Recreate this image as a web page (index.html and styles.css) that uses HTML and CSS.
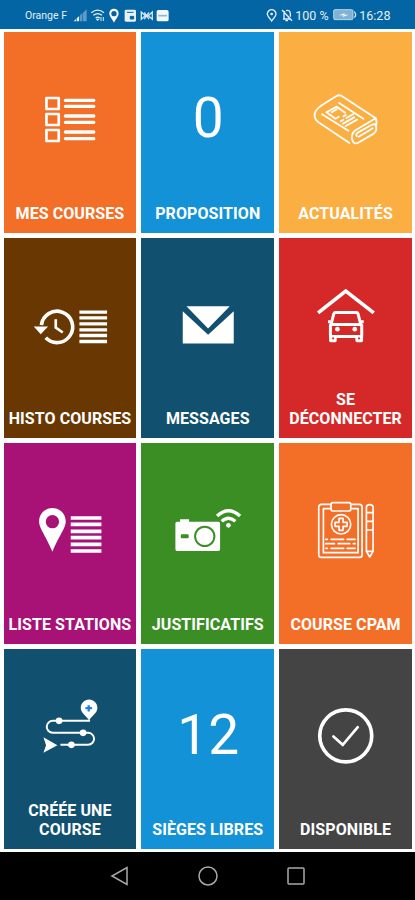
FILE: index.html
```
<!DOCTYPE html>
<html lang="fr">
<head>
    <meta charset="UTF-8">
    <meta name="viewport" content="width=device-width, initial-scale=1.0">
    <title>Menu</title>
    <link rel="stylesheet" href="styles.css">
</head>
<body>
    <header class="status-bar">
        <span class="carrier">Orange F</span>
        <svg class="status-icons" viewBox="220 20 292 50">
            <path d="M222 63h7v-7zM231 63h7V48l-7 6z" fill="#e3eff7"/>
            <path d="M240 63h7V39l-7 7zM249 63h12V27l-12 12z" fill="#5c9cc6"/>
            <g fill="none" stroke="#e3eff7" stroke-width="4">
                <path d="M275 37q19-15 38 0M281 45q13-10 26 0M288 53q6-5 12 0"/>
                <path d="M304 50v12M311 50v12" stroke-width="3"/>
            </g>
            <path d="M294 62l-6-7h12z" fill="#e3eff7"/>
            <path fill-rule="evenodd" d="M343 25c-8 0-14 6-14 14 0 10 8 16 14 28 6-12 14-18 14-28 0-8-6-14-14-14zm0 7a8 8 0 1 1 0 16 8 8 0 0 1 0-16z" fill="#fff"/>
            <rect x="375" y="28" width="34" height="36" rx="4" fill="#e8f2f8"/>
            <path d="M382 36h20M392 48h10v8h-10z" stroke="#0465a4" stroke-width="3" fill="#0465a4"/>
            <path d="M425 35v22l12-11zM458 35v22l-12-11zM434 36l14 20M448 36l-14 20" fill="none" stroke="#d3e6f2" stroke-width="4"/>
            <rect x="471" y="29" width="36" height="34" rx="5" fill="#f1f7fa"/>
            <path d="M476 46h26" stroke="#8bb8d6" stroke-width="5"/>
        </svg>
        <svg class="status-alerts" viewBox="185 20 84 50">
            <g fill="none" stroke="#e3eff7" stroke-width="4">
                <path d="M202 28c-7 0-13 6-13 13 0 8 8 13 13 21 5-8 13-13 13-21 0-7-6-13-13-13z"/>
                <path d="M233 29l30 32M236 56h22M239 55V42q0-6 3-9M245 31q12-4 13 9v9M243 61h8"/>
            </g>
            <circle cx="202" cy="41" r="4" fill="#e3eff7"/>
        </svg>
        <span class="percent">100 %</span>
        <svg class="battery" viewBox="384 25 72 40">
            <rect x="386" y="30" width="58" height="30" rx="4" fill="#7fb2d3" stroke="#b7d5e7" stroke-width="3"/>
            <path d="M448 36q8 9 0 18" fill="none" stroke="#d3e6f2" stroke-width="4"/>
            <path d="M402 47l18-7-3 5h14l-18 7 3-5z" fill="#fff"/>
        </svg>
        <span class="clock">16:28</span>
    </header>

    <main class="menu">
        <a class="tile orange">
            <svg class="icon" viewBox="12 -24 398 300">
                <g fill="none" stroke="#fff" stroke-width="8" stroke-linejoin="round">
                    <rect x="139" y="54" width="37" height="33"/>
                    <rect x="139" y="102" width="37" height="33"/>
                    <rect x="139" y="150" width="37" height="33"/>
                    <path d="M196 61h85M196 79h85M196 108h85M196 127h85M196 156h85M196 176h85" stroke-width="10" stroke-linecap="round"/>
                </g>
            </svg>
            <span class="label">MES COURSES</span>
        </a>
        <a class="tile blue">
            <span class="number">0</span>
            <span class="label">PROPOSITION</span>
        </a>
        <a class="tile yellow">
            <svg class="icon" viewBox="13 -24 398 300">
                <g class="line" stroke-width="5.5">
                    <path d="M224 189L130 126Q113 112 123 93Q129 84 141 76L184 49Q193 43 201 48L303 115L242 151Q229 161 232 178Q236 194 249 189L297 161Q309 151 303 134Q298 131 290 135L249 158Q242 164 246 168"/>
                    <path d="M303 115Q308 126 303 138M252 170L294 145M193 69L266 116M142 103L221 152"/>
                    <path d="M211 98L186 80L155 97L182 116L192 110M171 97L186 88M206 109l7-4M215 114l21-12M198 124l8-5M205 131l33-19M213 138l34-19"/>
                </g>
            </svg>
            <span class="label">ACTUALITÉS</span>
        </a>

        <a class="tile brown">
            <svg class="icon" viewBox="12 -7.5 398 300">
                <path d="M124 134A47 47 0 1 1 137 172" fill="none" stroke="#fff" stroke-width="11"/>
                <path d="M101 138h43l-22 23z" fill="#fff"/>
                <path d="M167 116v25l21 15" fill="none" stroke="#fff" stroke-width="8"/>
                <path d="M238 95h83M238 112h83M238 130h83M238 148h83M238 165h83M238 183h83" stroke="#fff" stroke-width="10"/>
            </svg>
            <span class="label">HISTO COURSES</span>
        </a>
        <a class="tile navy">
            <svg class="icon" viewBox="10 -7.5 398 300">
                <path d="M146 77h130l-65 67zM135 92l76 71 77-71v97H135z" fill="#fff"/>
            </svg>
            <span class="label">MESSAGES</span>
        </a>
        <a class="tile red">
            <svg class="icon" viewBox="424 -7.5 398 300">
                <path d="M541 97L624 32L708 97" fill="none" stroke="#fff" stroke-width="11"/>
                <g fill="none" stroke="#fff" stroke-width="9" stroke-linejoin="round">
                    <path d="M580 132L588 100Q589 96 594 96H655Q660 96 661 100L669 132"/>
                    <rect x="578" y="132" width="94" height="36" rx="4"/>
                </g>
                <path d="M574 166h23v14q0 5-5 5h-13q-5 0-5-5zM653 166h23v14q0 5-5 5h-13q-5 0-5-5zM571 119h9v9h-9zM669 119h9v9h-9z" fill="#fff"/>
                <path d="M583 171h6v5h-6zM661 171h6v5h-6z" fill="#d52929"/>
                <circle cx="599" cy="146" r="7" fill="#fff"/>
                <circle cx="651" cy="146" r="7" fill="#fff"/>
            </svg>
            <span class="label">SE<br>DÉCONNECTER</span>
        </a>

        <a class="tile purple">
            <svg class="icon" viewBox="12 -21 398 300">
                <path fill-rule="evenodd" d="M157 54c-22 0-40 17-40 40 0 20 16 36 40 91 24-55 40-71 40-91 0-23-18-40-40-40zm0 21a20 20 0 1 1 0 40 20 20 0 0 1 0-40z" fill="#fff"/>
                <path d="M212 84h92M212 103h92M212 124h92M212 143h92M212 163h92M212 183h92" stroke="#fff" stroke-width="11"/>
            </svg>
            <span class="label">LISTE STATIONS</span>
        </a>
        <a class="tile green">
            <svg class="icon" viewBox="10 -21 398 300">
                <path d="M118 95h9v-7h27v7h88q5 0 5 5v78q0 5-5 5H118q-5 0-5-5v-78q0-5 5-5z" fill="#fff"/>
                <circle cx="201" cy="139" r="29" fill="none" stroke="#3a8e24" stroke-width="6"/>
                <rect x="129" y="133" width="24" height="12" rx="4" fill="#3a8e24"/>
                <path d="M238 78Q272 46 307 78M252 94Q272 75 293 94" fill="none" stroke="#fff" stroke-width="10"/>
                <circle cx="272" cy="106" r="7" fill="#fff"/>
            </svg>
            <span class="label">JUSTIFICATIFS</span>
        </a>
        <a class="tile orange">
            <svg class="icon" viewBox="13 -21 398 300">
                <g class="line" stroke-width="5">
                    <path d="M168 43h-28q-8 0-8 8v143q0 8 8 8h114q8 0 8-8V51q0-8-8-8h-26"/>
                    <path d="M168 56h-22v132h104V56h-22"/>
                    <rect x="169" y="38" width="59" height="25" rx="5"/>
                    <circle cx="199" cy="103" r="29"/>
                    <path d="M193 85h12v12h12v12h-12v12h-12v-12h-12V97h12z"/>
                    <path d="M153 148h5M169 148h38M217 148h24M153 161h26M190 161h35M236 161h5M153 175h5M169 175h38M217 175h24"/>
                    <path d="M275 52q0-8 10-8t10 8v132l-10 17-10-17zM275 68h20M275 94h20M275 120h20M275 184h20"/>
                </g>
            </svg>
            <span class="label">COURSE CPAM</span>
        </a>

        <a class="tile navy">
            <svg class="icon" viewBox="12 -4.5 398 300">
                <path d="M270 91H158a18 18 0 0 0 0 36H264a18 18 0 0 1 0 36H181" fill="none" stroke="#fff" stroke-width="6"/>
                <circle cx="177" cy="91" r="10" fill="#fff"/>
                <circle cx="249" cy="127" r="10" fill="#fff"/>
                <circle cx="214" cy="163" r="10" fill="#fff"/>
                <path d="M130 140l42 24-42 23 8-23z" fill="#fff"/>
                <path d="M267 27c-14 0-25 11-25 25 0 16 15 22 25 38 10-16 25-22 25-38 0-14-11-25-25-25z" fill="#fff"/>
                <path d="M266 44v19M256 53h20" stroke="#1b86df" stroke-width="7"/>
            </svg>
            <span class="label">CRÉÉE UNE<br>COURSE</span>
        </a>
        <a class="tile blue">
            <span class="number">12</span>
            <span class="label">SIÈGES LIBRES</span>
        </a>
        <a class="tile grey">
            <svg class="icon" viewBox="424 -4.5 398 300">
                <circle cx="624" cy="136" r="78" fill="none" stroke="#fff" stroke-width="11"/>
                <path d="M587 138l28 25 45-53" fill="none" stroke="#fff" stroke-width="8" stroke-linecap="round"/>
            </svg>
            <span class="label">DISPONIBLE</span>
        </a>
    </main>

    <footer class="nav-bar">
        <svg viewBox="0 0 20 20"><path d="M17 1.5v17L2 10z"/></svg>
        <svg viewBox="0 0 20 20"><circle cx="10" cy="10" r="9"/></svg>
        <svg viewBox="0 0 20 20"><rect x="2" y="2" width="16" height="16" rx="1"/></svg>
    </footer>
</body>
</html>
```
FILE: styles.css
```
* {
    box-sizing: border-box;
}

body {
    margin: 0;
    height: 900px;
    display: flex;
    flex-direction: column;
    overflow: hidden;
    font-family: Roboto, sans-serif;
    background: #fff;
    color: #fff;
}

/* Status bar */
.status-bar {
    height: 29px;
    padding: 1px 0 0 25px;
    display: flex;
    align-items: center;
    background: #0465a4;
    color: #e3eff7;
    font-size: 12.5px;
    white-space: nowrap;
}

.carrier {
    width: 48px;
    font-size: 10.5px;
}

.status-icons {
    width: 97.3px;
    height: 16.7px;
}

.status-alerts {
    width: 28px;
    height: 16.7px;
    margin-left: 96px;
}

.percent {
    width: 38px;
    margin-left: 1px;
}

.battery {
    width: 24px;
    height: 13.3px;
}

.clock {
    margin-left: 2px;
}

/* Tiles */
.menu {
    height: 823px;
    padding: 3px 3px 3px 3.5px;
    display: grid;
    grid-template-columns: repeat(3, 1fr);
    grid-auto-rows: 200.5px;
    gap: 5px;
}

.tile {
    padding: 40px 0 10px;
    display: flex;
    flex-direction: column;
    justify-content: space-between;
    text-align: center;
}

.icon {
    width: 100%;
    height: 100px;
}

.line {
    fill: none;
    stroke: #fff;
    stroke-linecap: round;
    stroke-linejoin: round;
}

.number {
    height: 100px;
    padding-left: 1px;
    font-size: 55px;
    line-height: 92px;
}

.label {
    font-size: 16px;
    font-weight: 700;
    line-height: 19px;
    letter-spacing: 0.08px;
}

.orange { background: #f36f27; }
.blue { background: #1492d7; }
.yellow { background: #fbae41; }
.brown { background: #693701; }
.navy { background: #11506f; }
.red { background: #d52929; }
.purple { background: #a81277; }
.green { background: #3a8e24; }
.grey { background: #444; }

/* Android navigation */
.nav-bar {
    height: 48px;
    padding-left: 1px;
    display: flex;
    justify-content: center;
    align-items: center;
    gap: 68px;
    background: #000;
}

.nav-bar svg {
    width: 20px;
    height: 20px;
    fill: none;
    stroke: #aaa;
    stroke-width: 1.5;
}
```
